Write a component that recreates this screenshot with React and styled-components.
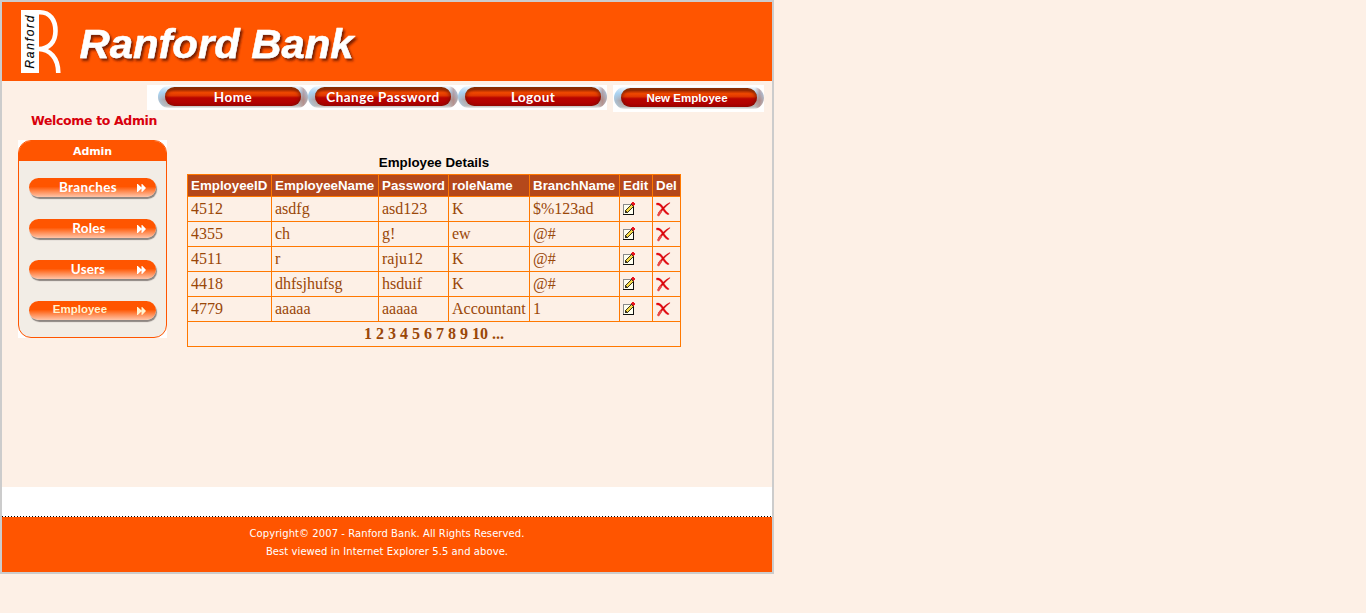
import React from "react";
import styled, { createGlobalStyle } from "styled-components";

const Global = createGlobalStyle`
  * { box-sizing: border-box; }
  body { margin: 0; background: #fdf0e6; }
`;

const Frame = styled.div`
  width: 774px;
  height: 574px;
  border: 2px solid #ccc;
  display: flex;
  flex-direction: column;
`;

const Header = styled.header`
  height: 79px;
  flex: none;
  background: #f50;
  display: flex;
`;

const Body = styled.main`
  height: 406px;
  flex: none;
`;

const Nav = styled.nav`
  display: flex;
  align-items: flex-start;
  gap: 6px;
  padding: 4px 0 0 145px;
  height: 31px;
`;

const NavStrip = styled.div`
  display: flex;
  background: #fff;
  width: ${(p) => p.$w}px;
  height: ${(p) => p.$h}px;
  padding: ${(p) => p.$pad};
`;

const Metal = styled.a`
  display: block;
  flex: none;
  width: ${(p) => p.$w || 150}px;
  height: 22px;
  padding: 1px 0 2px 7px;
  border-radius: 11px;
  background: linear-gradient(90deg, rgba(170, 215, 245, 0.7) 0, rgba(190, 200, 215, 0) 6%, rgba(0, 0, 0, 0) 94%, rgba(180, 130, 125, 0.6) 97%, rgba(180, 190, 205, 0.6) 100%),
    linear-gradient(#f4fafe 0, #a9cfee 30%, #ad9a98 62%, #b9b9b9 90%, #ececec 100%);
`;

const Pill = styled.span`
  display: flex;
  align-items: center;
  justify-content: center;
  width: 136px;
  height: 19px;
  border-radius: 10px;
  border-top: 2px solid #8a2c00;
  background: linear-gradient(#a83200 0, #f04800 22%, #e03800 38%, #b80400 52%, #ac0000 100%);
  box-shadow: inset 2px 0 3px rgba(110, 20, 0, 0.5), inset -2px 0 3px rgba(110, 20, 0, 0.5);
  color: #fff;
  white-space: nowrap;
  font: ${(p) => p.$font};
  letter-spacing: ${(p) => p.$ls || 0}px;
  padding: 0 ${(p) => p.$pr || 0}px 2px 0;
`;

const Welcome = styled.div`
  padding-left: 29px;
  height: 28px;
  font: bold 12.5px/17px "DejaVu Sans", Verdana, sans-serif;
  letter-spacing: -0.35px;
  color: #d8000c;
`;

const Columns = styled.div`
  display: flex;
  align-items: flex-start;
  gap: 20px;
  padding-left: 16px;
`;

const SideBack = styled.aside`
  background: #fff;
  width: 149px;
  height: 198px;
`;

const Side = styled.div`
  height: 198px;
  border: 1px solid #f50;
  border-radius: 13px;
  background: #f2ede6;
  overflow: hidden;
`;

const SideTitle = styled.div`
  height: 20px;
  background: #f50;
  color: #fff;
  text-align: center;
  font: bold 11px/21px "DejaVu Sans", Verdana, sans-serif;
  letter-spacing: -0.1px;
`;

const SideList = styled.div`
  display: flex;
  flex-direction: column;
  gap: 22px;
  padding: 17px 10px 0;
`;

const SideButton = styled.a`
  display: flex;
  align-items: center;
  width: 127px;
  height: 19px;
  border-radius: 10px;
  background: linear-gradient(#f50 0, #f50 45%, #ff8a50 70%, #ffc4a8 100%);
  box-shadow: 1px 2px 1px #8d8581;
  color: ${(p) => p.$color || "#fff"};
  font: ${(p) => p.$font};
  letter-spacing: ${(p) => p.$ls || 0}px;
`;

const SideLabel = styled.span`
  width: 90px;
  flex: none;
  margin-left: ${(p) => p.$shift}px;
  text-align: center;
  padding-bottom: ${(p) => p.$lift || 1}px;
`;

const Arrows = styled.svg`
  flex: none;
  margin-left: auto;
  margin-right: 10px;
`;

const Details = styled.section`
  width: 494px;
  padding-top: 12px;
`;

const Caption = styled.div`
  height: 22px;
  text-align: center;
  font: bold 13.333px/22px "Liberation Sans", Arial, sans-serif;
  color: #000;
`;

const Grid = styled.table`
  width: 494px;
  table-layout: fixed;
  border-collapse: separate;
  border-spacing: 0;
  border-left: 1px solid #ff7800;
  border-top: 1px solid #ff7800;
`;

const Th = styled.th`
  height: 22px;
  padding: 0 0 0 3px;
  text-align: left;
  white-space: nowrap;
  background: #b5481b;
  color: #fff;
  border-right: 1px solid #ff7800;
  border-bottom: 1px solid #ff7800;
  font: bold 13.333px/20px "Liberation Sans", Arial, sans-serif;
`;

const Td = styled.td`
  height: 25px;
  padding: ${(p) => (p.$pager ? "0" : "0 0 0 3px")};
  color: #9a4708;
  border-right: 1px solid #ff7800;
  border-bottom: 1px solid #ff7800;
  font: ${(p) => (p.$pager ? "bold" : "normal")} 16px/24px "Liberation Serif", "Times New Roman", serif;
  text-align: ${(p) => (p.$pager ? "center" : "left")};
  svg { display: block; }
`;

const Spacer = styled.div`
  height: 29px;
  flex: none;
  background: #fff;
`;

const DottedRule = styled.div`
  height: 1px;
  flex: none;
  background: repeating-linear-gradient(90deg, #000 0 1px, #fff 1px 3px);
`;

const Footer = styled.footer`
  flex: 1;
  background: #f50;
  color: #fff;
  text-align: center;
  padding-top: 8px;
  font: 10px/18px "DejaVu Sans", Verdana, sans-serif;
  letter-spacing: 0.07px;
`;

const Logo = () => (
  <svg width="370" height="79" viewBox="2 2 370 79">
    <defs>
      <filter id="ts" x="-5%" y="-20%" width="110%" height="150%">
        <feDropShadow dx="2" dy="2.5" stdDeviation="1.2" floodColor="#6a1800" floodOpacity="0.9" />
      </filter>
    </defs>
    <rect x="21" y="10" width="18" height="63" fill="#fff" />
    <path d="M38 12.300 H40 C50 12.300 55.500 20 55.500 31 C55.500 42 49 49 38.500 49 C50 49.500 58.300 58 58.300 73" fill="none" stroke="#fff" strokeWidth="4.600" />
    <text transform="translate(34 68.500) rotate(-90)" textLength="53" fontFamily="Liberation Sans, Arial, sans-serif" fontStyle="italic" fontSize="12" fill="#000" stroke="#000" strokeWidth="0.150">Ranford</text>
    <text x="79.500" y="57.500" textLength="274" lengthAdjust="spacingAndGlyphs" fontFamily="Liberation Sans, Arial, sans-serif" fontWeight="bold" fontStyle="italic" fontSize="40" fill="#fff" stroke="#fff" strokeWidth="0.500" strokeLinejoin="round" filter="url(#ts)">Ranford Bank</text>
  </svg>
);

const EditIcon = () => (
  <svg width="13" height="14" viewBox="0 0 13 14" shapeRendering="crispEdges">
    <rect x="0" y="2" width="11" height="11" fill="#111" />
    <path d="M0 2 H10 V3 H1 V12 H0 Z" fill="#8a8a8a" />
    <rect x="1" y="3" width="9" height="9" fill="#fffff0" />
    <path d="M8 1 H10 V3 H11 V5 H10 V6 H9 V7 H8 V8 H7 V9 H6 V10 H5 V11 H2 V8 H3 V7 H4 V6 H5 V5 H6 V4 H7 V3 H8 Z" fill="#3a3420" />
    <path d="M3 8 H4 V7 H5 V6 H6 V5 H7 V4 H8 V3 H9 V4 H10 V5 H9 V6 H8 V7 H7 V8 H6 V9 H5 V10 H4 V9 H3 Z" fill="#f8dc48" />
    <path d="M9 0 H11 V1 H12 V3 H11 V4 H10 V3 H9 V2 H8 V1 H9 Z" fill="#e8141c" />
  </svg>
);

const DeleteIcon = () => (
  <svg width="15" height="15" viewBox="0 0 15 15">
    <path d="M0.500 1.200 C4 0.500 6.500 3.500 8 6.500 C9.500 8.500 11 10.500 13.200 12 L12 12.800 C9 11.500 7.500 9 6 6.500 C4.500 4 3 2.700 0.500 2.800 Z" fill="#e0060e" stroke="#e0060e" strokeWidth="0.400" />
    <path d="M13.800 0.500 C9.500 2.500 5.500 6.500 2.200 11 L3.600 12.500 C6.500 8 9.500 4.500 13.800 1.200 Z" fill="#d8060c" stroke="#d8060c" strokeWidth="0.300" />
    <path d="M2.400 13 L4.600 9.500" stroke="#e84a48" strokeWidth="2.400" strokeLinecap="round" />
  </svg>
);

const gothic = 'bold 13.5px/16px Lato, "Century Gothic", sans-serif';
const arialBold = 'bold 11.5px/16px "Liberation Sans", Arial, sans-serif';

const navItems = [
  { label: "Home", ls: 0.5, w: 150 },
  { label: "Change Password", ls: 0.47, w: 150 },
  { label: "Logout", ls: 0.4, w: 149 },
];

const sideItems = [
  { label: "Branches", shift: 14, font: gothic, ls: 0.35 },
  { label: "Roles", shift: 15, font: gothic, ls: 0.2 },
  { label: "Users", shift: 14, font: gothic, ls: 0.1 },
  { label: "Employee", shift: 6, font: arialBold, lift: 3, color: "#fff3d0" },
];

const widths = [84, 107, 70, 81, 90, 33, 28];
const heads = ["EmployeeID", "EmployeeName", "Password", "roleName", "BranchName", "Edit", "Del"];
const rows = [
  ["4512", "asdfg", "asd123", "K", "$%123ad"],
  ["4355", "ch", "g!", "ew", "@#"],
  ["4511", "r", "raju12", "K", "@#"],
  ["4418", "dhfsjhufsg", "hsduif", "K", "@#"],
  ["4779", "aaaaa", "aaaaa", "Accountant", "1"],
];

export default function App() {
  return (
    <>
      <Global />
      <Frame>
        <Header><Logo /></Header>
        <Body>
          <Nav>
            <NavStrip $w={460} $h={25} $pad="1px 0 0 11px">
              {navItems.map((n) => (
                <Metal key={n.label} $w={n.w}><Pill $font={gothic} $ls={n.ls}>{n.label}</Pill></Metal>
              ))}
            </NavStrip>
            <NavStrip $w={151} $h={27} $pad="2px 0 0 1px">
              <Metal><Pill $font={arialBold} $pr={4}>New Employee</Pill></Metal>
            </NavStrip>
          </Nav>
          <Welcome>Welcome to Admin</Welcome>
          <Columns>
            <SideBack>
              <Side>
                <SideTitle>Admin</SideTitle>
                <SideList>
                  {sideItems.map((s) => (
                    <SideButton key={s.label} $font={s.font} $ls={s.ls} $color={s.color}>
                      <SideLabel $shift={s.shift} $lift={s.lift}>{s.label}</SideLabel>
                      <Arrows width="9" height="8" viewBox="0 0 9 8">
                        <path d="M0 0 H0.800 L4.500 3.400 V0 H5.200 L9 4 L5.200 8 H4.500 V4.600 L0.800 8 H0 Z" fill={s.color || "#fff"} />
                      </Arrows>
                    </SideButton>
                  ))}
                </SideList>
              </Side>
            </SideBack>
            <Details>
              <Caption>Employee Details</Caption>
              <Grid>
                <colgroup>{widths.map((w, i) => <col key={i} width={w} />)}</colgroup>
                <thead><tr>{heads.map((h) => <Th key={h}>{h}</Th>)}</tr></thead>
                <tbody>
                  {rows.map((r) => (
                    <tr key={r[0]}>
                      {r.map((c, i) => <Td key={i}>{c}</Td>)}
                      <Td><EditIcon /></Td>
                      <Td><DeleteIcon /></Td>
                    </tr>
                  ))}
                  <tr><Td $pager colSpan={7}>1 2 3 4 5 6 7 8 9 10 ...</Td></tr>
                </tbody>
              </Grid>
            </Details>
          </Columns>
        </Body>
        <Spacer />
        <DottedRule />
        <Footer>
          <div>Copyright© 2007 - Ranford Bank. All Rights Reserved.</div>
          <div>Best viewed in Internet Explorer 5.5 and above.</div>
        </Footer>
      </Frame>
    </>
  );
}
